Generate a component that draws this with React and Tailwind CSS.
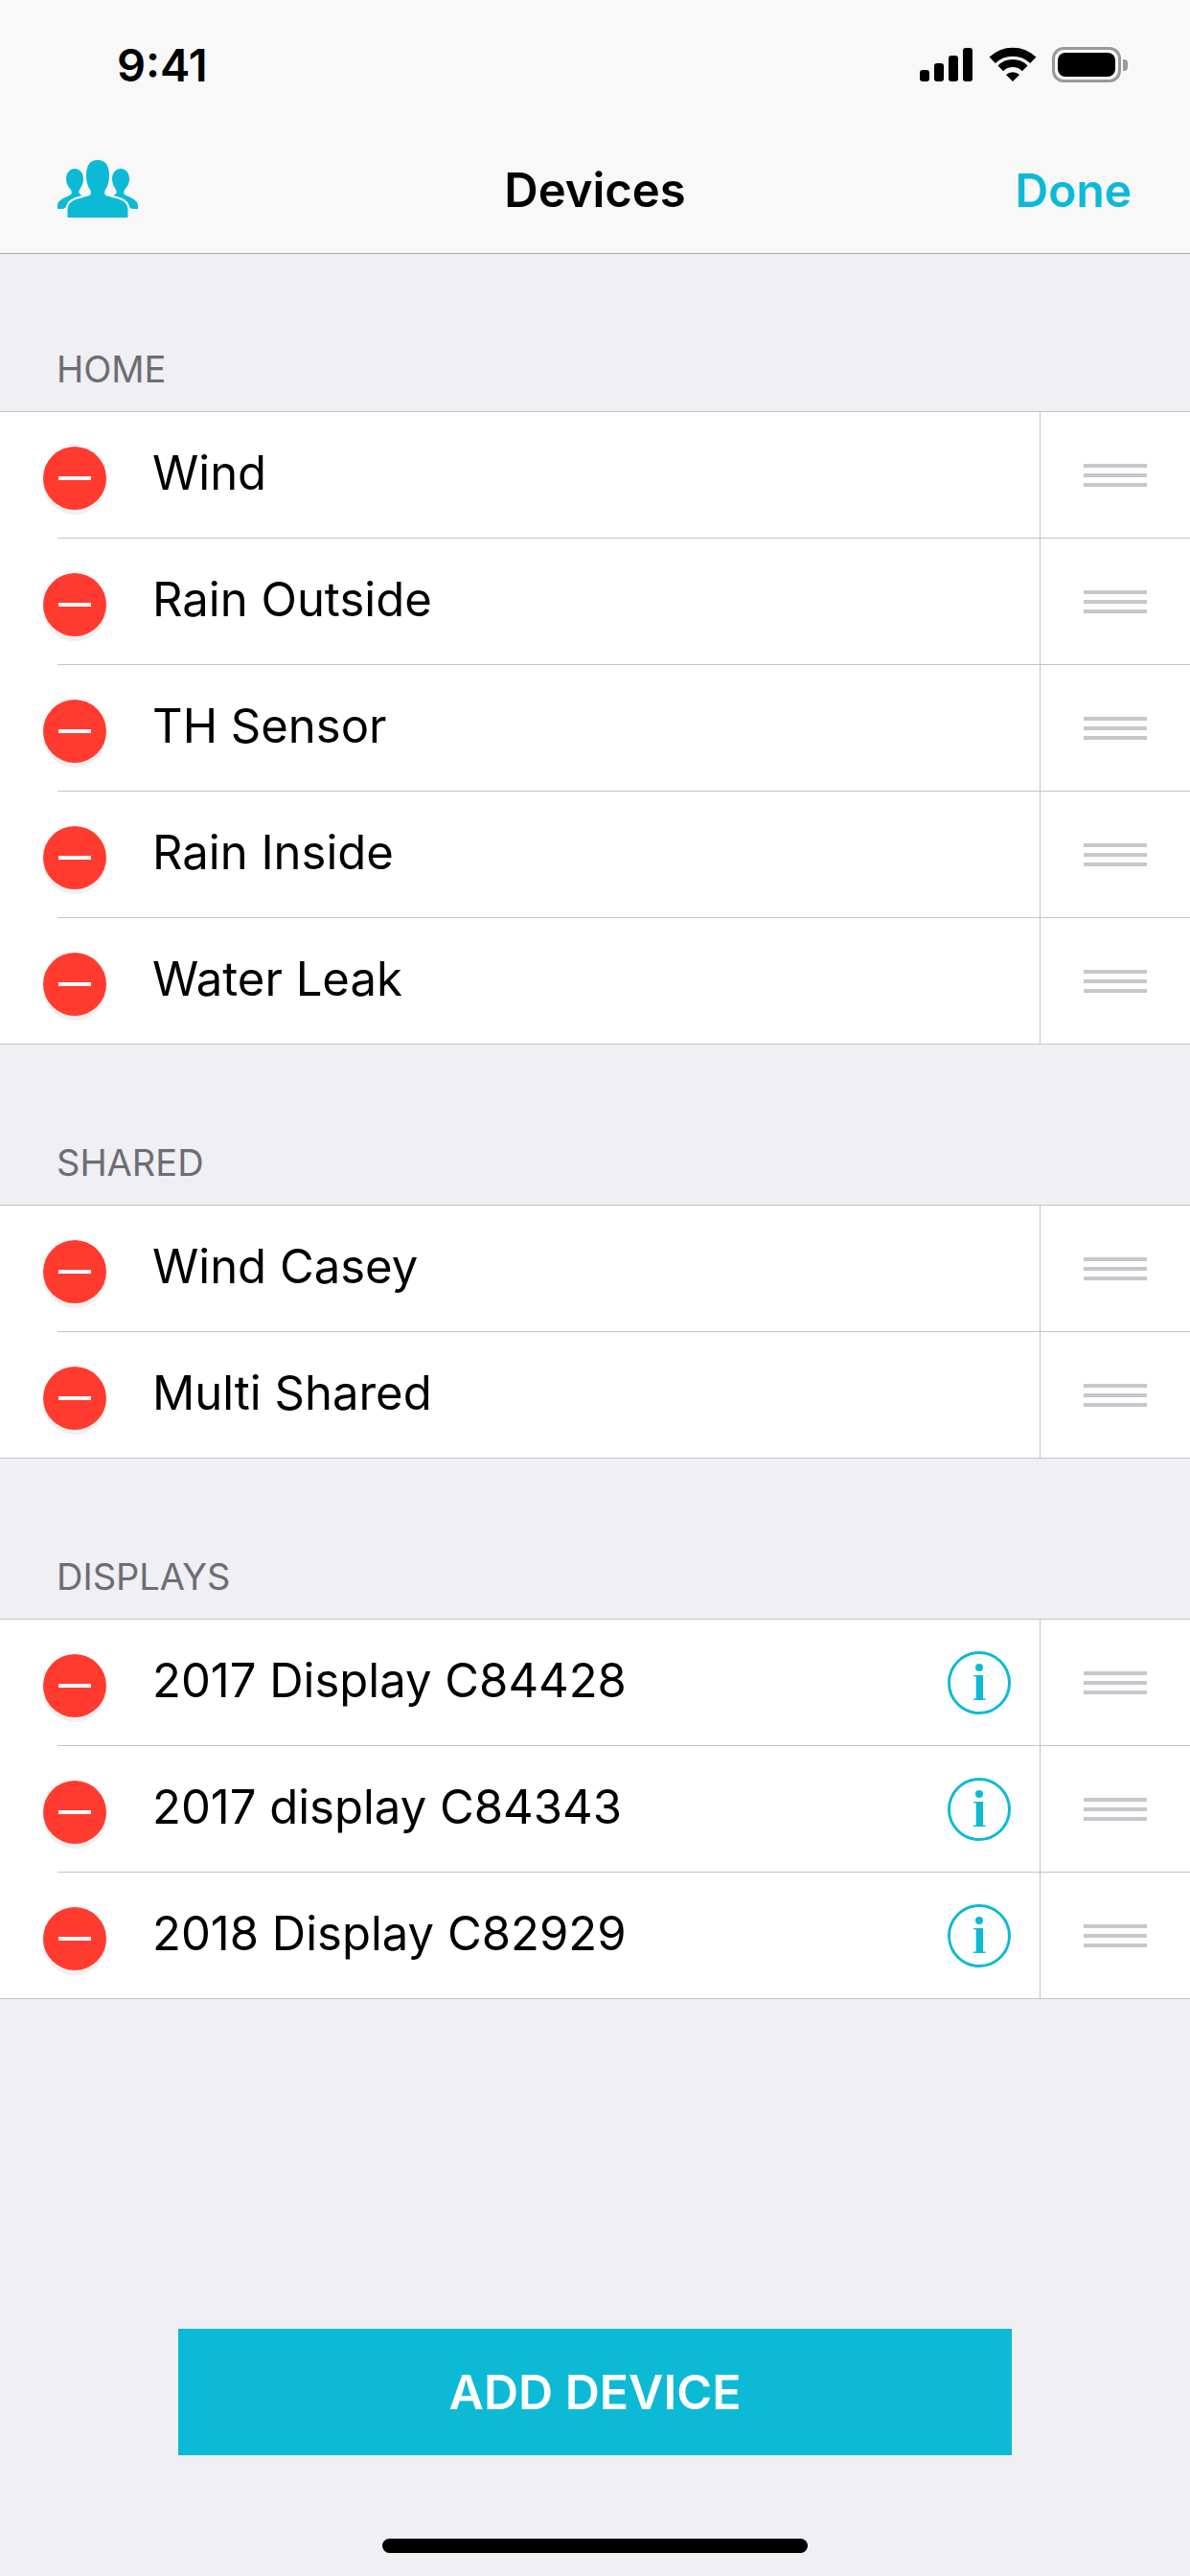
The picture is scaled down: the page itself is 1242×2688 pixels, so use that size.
const sections = [
  { title: 'HOME', head: 'h-[164px]', items: ['Wind', 'Rain Outside', 'TH Sensor', 'Rain Inside', 'Water Leak'] },
  { title: 'SHARED', head: 'h-[167px]', items: ['Wind Casey', 'Multi Shared'] },
  { title: 'DISPLAYS', head: 'h-[167px]', info: true, items: ['2017 Display C84428', '2017 display C84343', '2018 Display C82929'] },
];

function PeopleIcon() {
  return (
    <svg width="84" height="60" viewBox="60 167 84 60" fill="#0dbad5">
      <path d="M60 218V215C60 210 64 208 68 206L74 203C75 202 75 200 74 198C71 195 69 191 69 187C69 180 73 176 78 176C83 176 87 180 87 187C87 191 85 195 83 198C82 200 82 202 84 203L88 206L66 218Z" />
      <path d="M144 218V215C144 210 140 208 136 206L130 203C129 202 129 200 130 198C133 195 135 191 135 187C135 180 131 176 126 176C121 176 117 180 117 187C117 191 119 195 121 198C122 200 122 202 120 203L116 206L138 218Z" />
      <path d="M69.500 228V219C69.500 212 73 209 79 207L93 203C94 202 94 200 93 198C90 194 89 188 89 183C89 172 94 166 102 166C110 166 115 172 115 183C115 188 114 194 111 198C110 200 110 202 111 203L125 207C131 209 134.500 212 134.500 219V228Z" stroke="#f8f8f8" strokeWidth="2" />
    </svg>
  );
}

function WifiIcon() {
  return (
    <svg width="50" height="38" viewBox="0 0 50 38" fill="none" stroke="#000">
      <path d="M3.700 14.800A30.500 30.500 0 0 1 46.300 14.800" strokeWidth="9" />
      <path d="M12.300 23.300A18 18 0 0 1 37.700 23.300" strokeWidth="8" />
      <path d="M25 37L18 30A10 10 0 0 1 32 30Z" fill="#000" stroke="none" />
    </svg>
  );
}

function InfoIcon() {
  return (
    <svg width="66" height="66" viewBox="0 0 66 66" fill="#0dbad5" className="shrink-0 mr-[30px]">
      <circle cx="33" cy="33" r="31.500" fill="none" stroke="#0dbad5" strokeWidth="3" />
      <circle cx="33" cy="17" r="4" />
      <path d="M27 25H37V49.500H39.500V51H27V49.500H29.700V26.200H27Z" />
    </svg>
  );
}

function Row({ name, info, last }) {
  return (
    <div className="h-[132px] flex relative">
      <div className="flex-1 flex items-center min-w-0 pl-[45px]">
        <div className="w-[66px] h-[66px] mt-[6px] rounded-full bg-[#ff3b30] shadow-[0_5px_0_#f0f0f0] flex items-center justify-center shrink-0">
          <div className="w-[34px] h-[4px] bg-white" />
        </div>
        <span className="ml-[48px] flex-1 text-[49px] text-black -mt-[4px]">{name}</span>
        {info && <InfoIcon />}
      </div>
      <div className="w-[157px] border-l border-[#c4c3c8] flex flex-col items-center justify-center gap-[6px]">
        <div className="w-[66px] h-[4px] bg-[#c7c7cc]" />
        <div className="w-[66px] h-[4px] bg-[#c7c7cc]" />
        <div className="w-[66px] h-[4px] bg-[#c7c7cc]" />
      </div>
      <div className={last ? 'absolute left-0 right-0 bottom-0 h-px bg-[#c4c3c8]' : 'absolute left-[60px] right-0 bottom-0 h-px bg-[#c4c3c8]'} />
    </div>
  );
}

export default function App() {
  return (
    <div className="w-[1242px] h-[2688px] bg-[#efeff4] flex flex-col overflow-hidden font-['Inter',sans-serif]">
      <header className="h-[265px] shrink-0 bg-[#f8f8f8] border-b border-[#a9a9ab]">
        <div className="h-[132px] flex items-start justify-between pt-[41px] pl-[122px] pr-[65px]">
          <span className="text-[47px] leading-[54px] font-semibold text-black">9:41</span>
          <div className="flex items-start pt-[7px]">
            <div className="flex items-end gap-[5px] h-[35px] mt-[2px]">
              <div className="w-[10px] h-[12px] rounded-[3px] bg-black" />
              <div className="w-[10px] h-[19px] rounded-[3px] bg-black" />
              <div className="w-[10px] h-[27px] rounded-[3px] bg-black" />
              <div className="w-[10px] h-[35px] rounded-[3px] bg-black" />
            </div>
            <div className="ml-[17px]"><WifiIcon /></div>
            <div className="ml-[16px] mt-[1px] w-[72px] h-[37px] rounded-[12px] border-[3px] border-[#999999] p-[3px]">
              <div className="w-full h-full rounded-[8px] bg-black" />
            </div>
            <div className="ml-[2px] mt-[14px] w-[5px] h-[12px] rounded-r-[4px] bg-[#999999]" />
          </div>
        </div>
        <div className="h-[130px] flex items-center justify-between relative pl-[60px] pr-[61px]">
          <PeopleIcon />
          <span className="absolute left-0 right-0 text-center text-[49px] font-semibold text-black mt-[4px]">Devices</span>
          <span className="text-[48px] font-semibold text-[#0dbad5] mt-[4px]">Done</span>
        </div>
      </header>

      {sections.map((section) => (
        <section key={section.title}>
          <div className={`${section.head} flex items-end pb-[18px] pl-[59px] text-[38px] leading-[52px] text-[#6d6d72]`}>{section.title}</div>
          <div className="bg-white border-t border-[#c4c3c8]">
            {section.items.map((name, i) => (
              <Row key={name} name={name} info={section.info} last={i === section.items.length - 1} />
            ))}
          </div>
        </section>
      ))}

      <div className="flex-1" />
      <button className="mx-auto w-[870px] h-[132px] shrink-0 bg-[#0dbad5] text-white text-[50px] font-semibold">ADD DEVICE</button>
      <div className="mx-auto mt-[87px] mb-[24px] w-[444px] h-[15px] rounded-full bg-black shrink-0" />
    </div>
  );
}
